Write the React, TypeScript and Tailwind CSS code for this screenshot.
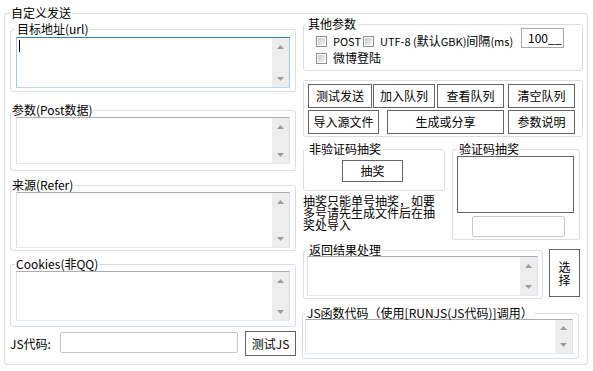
import type { ReactNode } from 'react'

function Arrow({ up }: { up?: boolean }) {
  return (
    <div className="flex h-[17px] items-center justify-center">
      <svg width="7" height="4" viewBox="0 0 7 4">
        <path d={up ? 'M3.5 0L7 4H0Z' : 'M0 0H7L3.5 4Z'} fill="#9c9c9c" />
      </svg>
    </div>
  )
}

function Memo({ className, focused }: { className: string; focused?: boolean }) {
  const border = focused
    ? 'border-t-[#3d7bad] border-x-[#a4c9e3] border-b-[#b7d9ed]'
    : 'border-t-[#abadb3] border-x-[#dbdfe6] border-b-[#e3e9ef]'
  return (
    <div className={`flex border bg-white ${border} ${className}`}>
      <div className="flex-1">
        {focused && <div className="ml-[2px] mt-[2px] h-[12px] w-[1px] bg-black" />}
      </div>
      <div className="flex w-[17px] flex-col justify-between bg-[#ededed]">
        <Arrow up />
        <Arrow />
      </div>
    </div>
  )
}

function Group({
  title,
  className,
  legendClass,
  children,
}: {
  title?: string
  className: string
  legendClass?: string
  children: ReactNode
}) {
  return (
    <fieldset className={`min-w-0 rounded-[3px] border border-[#d5dfe5] ${className}`}>
      {title && <legend className={`leading-[14px] ${legendClass}`}>{title}</legend>}
      {children}
    </fieldset>
  )
}

function Btn({ className, children }: { className: string; children: ReactNode }) {
  return (
    <button
      type="button"
      className={`flex items-center justify-center border border-[#646464] bg-white ${className}`}
    >
      {children}
    </button>
  )
}

function Check({ className }: { className: string }) {
  return (
    <div className={`h-[11px] w-[11px] shrink-0 border border-[#8e8f8f] bg-white p-[1px] ${className}`}>
      <div className="h-full w-full bg-linear-to-br from-[#cbcbcb] to-[#f3f3f3]" />
    </div>
  )
}

export default function App() {
  return (
    <div className="h-[371px] w-[593px] overflow-hidden bg-white pl-[4px] pt-[6px] font-['Noto_Sans_CJK_SC','Noto_Sans',sans-serif] text-[12px] leading-[14px] text-black">
      <fieldset className="w-[584px] min-w-0 rounded-[3px] border border-[#d5dfe5]">
        <legend className="ml-[5px] px-[1px] leading-[14px]">自定义发送</legend>
        <div className="flex pb-[5px] pl-[5px]">
          {/* left column */}
          <div className="flex w-[286px] flex-col">
            <Group className="mt-[2px]" legendClass="ml-[4px] px-[2px]" title="目标地址(url)">
              <div className="px-[5px] pb-[3px] pt-[1px]">
                <Memo focused className="h-[51px]" />
              </div>
            </Group>
            <Group className="mt-[11px]" legendClass="ml-0 px-[1px]" title="参数(Post数据)">
              <div className="px-[5px] pb-[6px]">
                <Memo className="h-[47px]" />
              </div>
            </Group>
            <Group className="mt-[7px]" legendClass="ml-0 px-[1px]" title="来源(Refer)">
              <div className="px-[5px] pb-[2px]">
                <Memo className="h-[56px]" />
              </div>
            </Group>
            <Group className="mt-[6px]" legendClass="ml-[4px] px-[1px]" title="Cookies(非QQ)">
              <div className="px-[5px] pb-[5px]">
                <Memo className="h-[50px]" />
              </div>
            </Group>
            <div className="mt-[4px] flex items-start">
              <span className="w-[50px] leading-[25px]">JS代码:</span>
              <div className="mt-[1px] h-[21px] w-[179px] rounded-[2px] border border-[#c6c6c6] bg-white" />
              <Btn className="ml-[7px] h-[25px] w-[51px] leading-[14px]">测试JS</Btn>
            </div>
          </div>

          {/* right column */}
          <div className="ml-[7px] flex w-[280px] flex-col">
            <Group className="-mt-[3px]" legendClass="ml-[2px] px-[2px]" title="其他参数">
              <div className="pb-[5px]">
                <div className="-mt-[3px] flex h-[20px] items-start pl-[12px] pr-[18px]">
                  <Check className="mt-[8px]" />
                  <span className="ml-[6px] mt-[6px] w-[30px] text-[11px]">POST</span>
                  <Check className="mt-[8px]" />
                  <span className="ml-[6px] mt-[6px] whitespace-nowrap">
                    <span className="text-[11px]">UTF-8 (</span>默认<span className="text-[11px]">GBK)</span>间隔<span className="text-[11px]">(ms)</span>
                  </span>
                  <div className="ml-auto h-[20px] w-[43px] border border-[#a9a9a9] bg-white pl-[6px] leading-[18px]">
                    100__
                  </div>
                </div>
                <div className="mt-[3px] flex h-[14px] items-start pl-[12px]">
                  <Check className="mt-[2px]" />
                  <span className="ml-[6px]">微博登陆</span>
                </div>
              </div>
            </Group>

            <div className="mt-[9px] rounded-[3px] border border-[#d5dfe5] pb-[2px] pt-[3px]">
              <div className="flex h-[24px] pl-[4px]">
                <Btn className="h-[24px] w-[64px]">测试发送</Btn>
                <Btn className="ml-[1px] h-[24px] w-[62px]">加入队列</Btn>
                <Btn className="ml-[2px] h-[24px] w-[67px]">查看队列</Btn>
                <Btn className="ml-[4px] h-[24px] w-[67px]">清空队列</Btn>
              </div>
              <div className="mt-[2px] flex h-[24px] pl-[4px]">
                <Btn className="h-[24px] w-[71px]">导入源文件</Btn>
                <Btn className="ml-[8px] h-[24px] w-[117px]">生成或分享</Btn>
                <Btn className="ml-[4px] h-[24px] w-[67px]">参数说明</Btn>
              </div>
            </div>

            <div className="mt-[5px] flex items-start">
              <div className="flex w-[142px] flex-col">
                <Group className="w-[142px]" legendClass="ml-[3px] px-[2px]" title="非验证码抽奖">
                  <div className="pb-[8px]">
                    <Btn className="ml-[38px] mt-[4px] h-[22px] w-[61px]">抽奖</Btn>
                  </div>
                </Group>
                <p className="mt-[4px] whitespace-nowrap leading-[12px]">
                  抽奖只能单号抽奖，如要
                  <br />
                  多号请先生成文件后在抽
                  <br />
                  奖处导入
                </p>
              </div>
              <Group className="ml-[7px] w-[128px]" legendClass="ml-[4px] px-[2px]" title="验证码抽奖">
                <div className="pb-[2px]">
                  <div className="ml-[4px] h-[57px] w-[117px] border border-[#646464] bg-white" />
                  <div className="ml-[19px] mt-[3px] h-[21px] w-[93px] rounded-[2px] border border-[#c8c8c8] bg-white" />
                </div>
              </Group>
            </div>

            <div className="mt-[3px] flex items-start">
              <Group className="w-[240px]" legendClass="ml-[3px] px-[2px]" title="返回结果处理">
                <div className="pb-[2px]">
                  <Memo className="-mt-[1px] ml-[3px] h-[40px] w-[231px]" />
                </div>
              </Group>
              <Btn className="ml-[6px] mt-[6px] h-[48px] w-[31px] flex-col leading-[13px]">
                <span>选</span>
                <span>择</span>
              </Btn>
            </div>

            <Group className="-ml-[1px] mt-[7px] w-[277px]" legendClass="ml-[2px] px-[2px]" title="JS函数代码（使用[RUNJS(JS代码)]调用）">
              <div className="pb-[4px]">
                <Memo className="-mt-[1px] ml-[2px] h-[35px] w-[268px]" />
              </div>
            </Group>
          </div>
        </div>
      </fieldset>
    </div>
  )
}
